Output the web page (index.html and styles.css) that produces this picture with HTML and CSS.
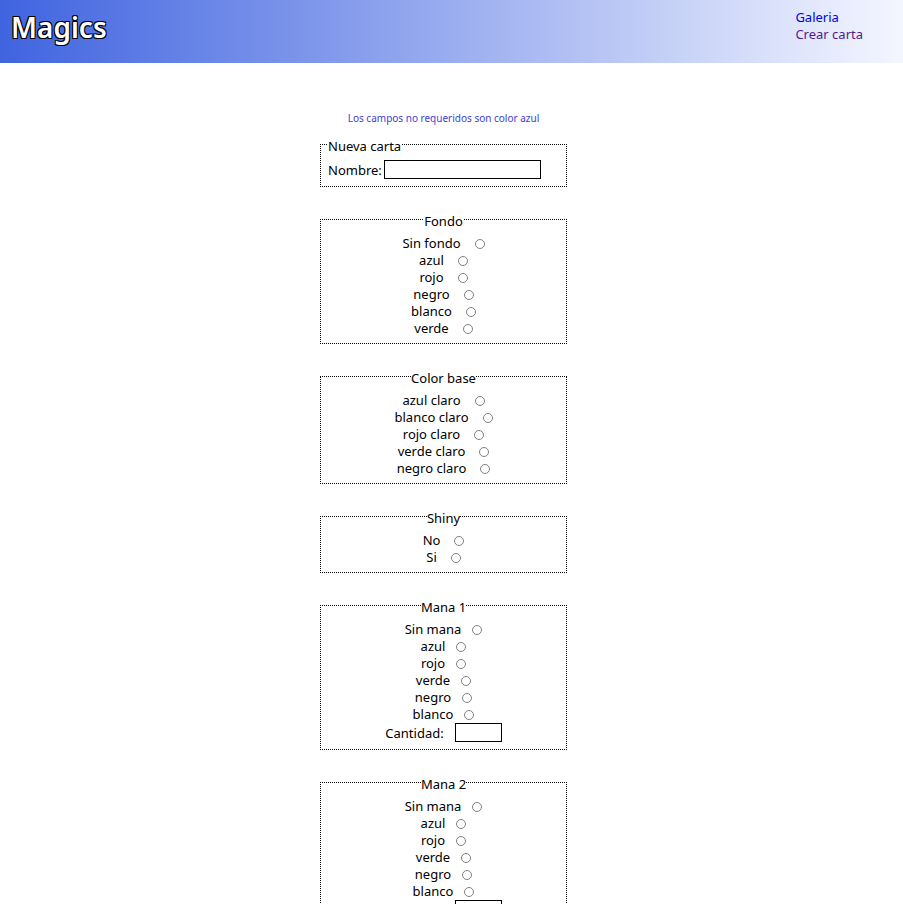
FILE: index.html
```html
<!DOCTYPE html>
<html lang="es">
<head>
<meta charset="utf-8">
<title>Magics</title>
<link rel="stylesheet" href="styles.css">
</head>
<body>
<header class="header">
  <h1 class="title">Magics</h1>
  <nav class="nav">
    <a class="link" href="#galeria">Galeria</a>
    <a class="link link-visited" href="#crear">Crear carta</a>
  </nav>
</header>
<main class="main">
  <form class="form">
    <p class="note">Los campos no requeridos son color azul</p>
    <fieldset class="group group-start">
      <legend>Nueva carta</legend>
      <div class="field"><label for="nombre">Nombre:</label><input class="box" type="text" id="nombre"></div>
    </fieldset>
    <fieldset class="group">
      <legend>Fondo</legend>
      <label class="option">Sin fondo<input type="radio" name="fondo"></label>
      <label class="option">azul<input type="radio" name="fondo"></label>
      <label class="option">rojo<input type="radio" name="fondo"></label>
      <label class="option">negro<input type="radio" name="fondo"></label>
      <label class="option">blanco<input type="radio" name="fondo"></label>
      <label class="option">verde<input type="radio" name="fondo"></label>
    </fieldset>
    <fieldset class="group">
      <legend>Color base</legend>
      <label class="option">azul claro<input type="radio" name="base"></label>
      <label class="option">blanco claro<input type="radio" name="base"></label>
      <label class="option">rojo claro<input type="radio" name="base"></label>
      <label class="option">verde claro<input type="radio" name="base"></label>
      <label class="option">negro claro<input type="radio" name="base"></label>
    </fieldset>
    <fieldset class="group">
      <legend>Shiny</legend>
      <label class="option">No<input type="radio" name="shiny"></label>
      <label class="option">Si<input type="radio" name="shiny"></label>
    </fieldset>
    <fieldset class="group mana">
      <legend>Mana 1</legend>
      <label class="option">Sin mana<input type="radio" name="mana1"></label>
      <label class="option">azul<input type="radio" name="mana1"></label>
      <label class="option">rojo<input type="radio" name="mana1"></label>
      <label class="option">verde<input type="radio" name="mana1"></label>
      <label class="option">negro<input type="radio" name="mana1"></label>
      <label class="option">blanco<input type="radio" name="mana1"></label>
      <div class="field"><label for="cantidad1">Cantidad:</label><input class="box box-small" type="text" id="cantidad1"></div>
    </fieldset>
    <fieldset class="group mana">
      <legend>Mana 2</legend>
      <label class="option">Sin mana<input type="radio" name="mana2"></label>
      <label class="option">azul<input type="radio" name="mana2"></label>
      <label class="option">rojo<input type="radio" name="mana2"></label>
      <label class="option">verde<input type="radio" name="mana2"></label>
      <label class="option">negro<input type="radio" name="mana2"></label>
      <label class="option">blanco<input type="radio" name="mana2"></label>
      <div class="field"><label for="cantidad2">Cantidad:</label><input class="box box-small" type="text" id="cantidad2"></div>
    </fieldset>
  </form>
</main>
</body>
</html>
```
FILE: styles.css
```css
* { box-sizing: border-box; }
body {
  margin: 0;
  height: 100vh;
  overflow: hidden;
  background: #fff;
  color: #000;
  font: 13px/17px "Segoe UI", "Noto Sans", sans-serif;
}
.header {
  display: flex;
  justify-content: space-between;
  padding: 8px 40px 17px 11px;
  background: linear-gradient(to right, #4064e0, #f4f6ff);
}
.title {
  margin: 0;
  color: #fff;
  font-size: 28px;
  line-height: 38px;
  font-weight: 600;
  text-shadow: 1px 1px #000, -1px -1px #000, 1px -1px #000, -1px 1px #000;
}
.nav { display: flex; flex-direction: column; padding-top: 1px; }
.link { color: #0000ee; text-decoration: none; }
.link-visited { color: #551a8b; }
.main {
  display: flex;
  justify-content: center;
  padding: 48px 16px 24px 0;
}
.form { width: 247px; }
.note {
  margin: 0 0 10px;
  color: #4040d8;
  font-size: 10px;
  line-height: 15px;
  text-align: center;
}
.group {
  display: flex;
  flex-direction: column;
  align-items: center;
  min-width: 0;
  margin: 0 0 24px;
  padding: 7px 7px 6px;
  border: 1px dotted #000;
}
.group-start { align-items: flex-start; }
legend { height: 17px; margin: 0 auto; padding: 0; line-height: 20px; }
.group-start legend { margin: 0; }
.option { display: flex; align-items: center; gap: 14px; }
.mana .option { gap: 11px; }
.option input {
  appearance: none;
  width: 10px;
  height: 10px;
  margin: 0;
  border: 1px solid #808080;
  border-radius: 50%;
  background: #fff;
}
.option input:checked { background: #4064e0; }
.field { display: flex; gap: 2px; height: 20px; align-items: flex-start; }
.field label { padding-top: 2px; }
.mana .field { gap: 11px; }
.box {
  width: 157px;
  height: 19px;
  margin: 0;
  padding: 1px 2px;
  border: 1px solid #000;
  background: #fff;
  font: inherit;
}
.box-small { width: 47px; }
```
